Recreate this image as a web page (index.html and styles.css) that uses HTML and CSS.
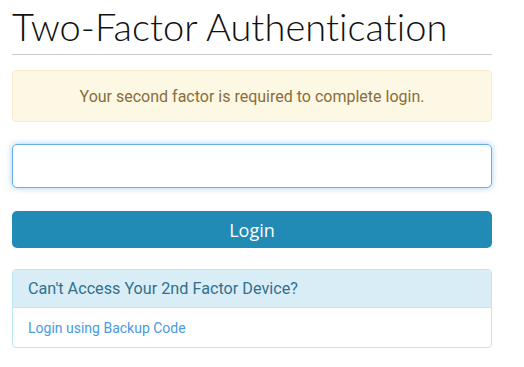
FILE: index.html
```html
<!DOCTYPE html>
<html lang="en">

<head>
  <meta charset="UTF-8">
  <title>Two-Factor Authentication</title>
  <link rel="stylesheet" href="styles.css">
</head>

<body>

  <div class="container">
    <h1 class="page-title">Two-Factor Authentication</h1>

    <div class="alert">Your second factor is required to complete login.</div>

    <form class="login-form">
      <input type="text" class="code-input" autofocus>
      <button type="button" class="login-btn">Login</button>
    </form>

    <!-- Backup code panel -->
    <div class="panel">
      <div class="panel-heading">Can't Access Your 2nd Factor Device?</div>
      <div class="panel-body">
        <a href="#" class="backup-link">Login using Backup Code</a>
      </div>
    </div>
  </div>

</body>

</html>
```

FILE: styles.css
```css
/* General Reset */
body {
  margin: 0;
  padding: 0;
  background: #fff;
  font-family: Roboto, 'Liberation Sans', sans-serif;
}

.container {
  width: 480px;
  margin-left: 12px;
  padding-top: 6px;
}

/* Title */
.page-title {
  margin: 0;
  padding-bottom: 8px;
  font-family: Lato, 'Open Sans', sans-serif;
  font-weight: 300;
  font-size: 38px;
  line-height: 40px;
  letter-spacing: 0.05px;
  color: #111;
  border-bottom: 1px solid #ccc;
}

/* Warning alert */
.alert {
  margin-top: 15px;
  height: 50px;
  display: flex;
  align-items: center;
  justify-content: center;
  background-color: #fcf8e3;
  border: 1px solid #faebcc;
  border-radius: 4px;
  color: #8a6d3b;
  font-size: 16px;
}

.login-form {
  margin-top: 22px;
  display: flex;
  flex-direction: column;
  gap: 23px;
}

.code-input {
  box-sizing: border-box;
  width: 480px;
  height: 44px;
  margin: 0;
  padding: 0 16px;
  font-size: 20px;
  border: 1px solid #66afe9;
  border-radius: 5px;
  box-shadow: 0 0 6px rgba(102, 175, 233, 0.6);
  outline: none;
}

.login-btn {
  height: 37px;
  margin: 0;
  background-color: #218bb5;
  color: #fff;
  border: none;
  border-radius: 5px;
  font-family: 'Open Sans', sans-serif;
  font-size: 18px;
  cursor: pointer;
}

/* Panel */
.panel {
  margin-top: 21px;
  border: 1px solid #bce8f1;
  border-radius: 4px;
  overflow: hidden;
}

.panel-heading {
  height: 37px;
  padding-left: 15px;
  display: flex;
  align-items: center;
  background-color: #d9edf7;
  border-bottom: 1px solid #bce8f1;
  color: #31708f;
  font-size: 16.2px;
}

.panel-body {
  height: 39px;
  padding-left: 15px;
  display: flex;
  align-items: center;
}

.backup-link {
  color: #4a9ae0;
  font-size: 14px;
  text-decoration: none;
}
```
